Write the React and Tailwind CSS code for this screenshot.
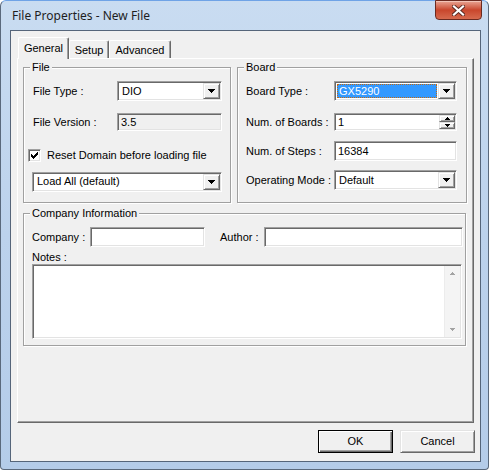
import React from "react";

// classic 3D edges
const sunken =
  "border border-t-[#a0a0a0] border-l-[#a0a0a0] border-r-white border-b-white shadow-[inset_1px_1px_0_#696969,inset_-1px_-1px_0_#e3e3e3]";
const raised =
  "border border-t-[#e3e3e3] border-l-[#e3e3e3] border-r-[#696969] border-b-[#696969] shadow-[inset_1px_1px_0_#fff,inset_-1px_-1px_0_#a0a0a0]";

function Tri({ up = false, color = "#000" }) {
  const rows = up ? [3, 2, 1, 0] : [0, 1, 2, 3];
  return (
    <svg width="7" height="4" viewBox="0 0 7 4" shapeRendering="crispEdges">
      {rows.map((r, i) => (
        <rect key={i} x={r} y={i} width={7 - r * 2} height="1" fill={color} />
      ))}
    </svg>
  );
}

function SmallTri({ up = false, color = "#000" }) {
  const rows = up ? [2, 1, 0] : [0, 1, 2];
  return (
    <svg width="5" height="3" viewBox="0 0 5 3" shapeRendering="crispEdges">
      {rows.map((r, i) => (
        <rect key={i} x={r} y={i} width={5 - r * 2} height="1" fill={color} />
      ))}
    </svg>
  );
}

function Combo({ value, width, selected = false }) {
  return (
    <div className={`${sunken} flex h-[20px] bg-white p-[1px]`} style={{ width }}>
      <div className="flex flex-1 items-center p-[1px]">
        {selected ? (
          <span className="flex h-full flex-1 items-center border border-dotted border-[#c46a10] bg-[#3399ff] pl-[1px] text-white">
            {value}
          </span>
        ) : (
          <span className="pl-[2px]">{value}</span>
        )}
      </div>
      <div className={`${raised} flex w-[17px] items-center justify-center bg-[#f0f0f0]`}>
        <Tri />
      </div>
    </div>
  );
}

function Edit({ value = "", className = "", readOnly = false }) {
  return (
    <div
      className={`${sunken} flex items-center p-[1px] pl-[3px] ${
        readOnly ? "bg-[#f0f0f0]" : "bg-white"
      } ${className}`}
    >
      {value}
    </div>
  );
}

function SpinEdit({ value }) {
  return (
    <div className={`${sunken} flex h-[18px] w-[123px] bg-white p-[1px]`}>
      <div className="flex flex-1 items-center pl-[2px]">{value}</div>
      <div className="flex w-[16px] flex-col">
        <div className={`${raised} flex h-[7px] items-center justify-center bg-[#f0f0f0]`}>
          <SmallTri up />
        </div>
        <div className={`${raised} flex h-[7px] items-center justify-center bg-[#f0f0f0]`}>
          <SmallTri />
        </div>
      </div>
    </div>
  );
}

function Check({ checked, label }) {
  return (
    <div className="flex items-center">
      <div className={`${sunken} flex h-[13px] w-[13px] items-center justify-center bg-white`}>
        {checked && (
          <svg width="7" height="7" viewBox="0 0 7 7" shapeRendering="crispEdges">
            <path d="M0 2h1v1h1v1h1v-1h1v-1h1v-1h1v-1h1v3h-1v1h-1v1h-1v1h-1v1h-1v-1h-1v-1h-1z" fill="#000" />
          </svg>
        )}
      </div>
      <span className="ml-[6px]">{label}</span>
    </div>
  );
}

function GroupBox({ title, className = "", children }) {
  return (
    <fieldset
      className={`border border-[#a0a0a0] shadow-[inset_1px_1px_0_#fff,1px_1px_0_#fff] ${className}`}
    >
      <legend className="ml-[6px] bg-[#f0f0f0] px-[2px] leading-[13px]">{title}</legend>
      {children}
    </fieldset>
  );
}

function Button({ label, isDefault = false }) {
  return (
    <button
      className={
        isDefault
          ? "h-[23px] w-[75px] border border-black bg-[#f0f0f0] shadow-[inset_1px_1px_0_#fff,inset_-1px_-1px_0_#696969,inset_-2px_-2px_0_#a0a0a0]"
          : `${raised} h-[23px] w-[75px] bg-[#f0f0f0]`
      }
    >
      {label}
    </button>
  );
}

function Tabs() {
  const tabs = [
    { label: "General", w: "w-[51px]", active: true },
    { label: "Setup", w: "w-[40px]" },
    { label: "Advanced", w: "w-[62px]" },
  ];
  return (
    <div className="flex h-[21px] items-end pl-[7px]">
      {tabs.map((t) => (
        <div
          key={t.label}
          className={`${t.w} flex items-start justify-center rounded-t-[2px] border-l border-t border-r border-l-white border-t-white border-r-[#696969] bg-[#f0f0f0] shadow-[inset_-1px_0_0_#a0a0a0] ${
            t.active ? "relative z-10 -mb-[1px] h-[22px] pt-[2px]" : "h-[18px] pt-[1px]"
          }`}
        >
          {t.label}
        </div>
      ))}
    </div>
  );
}

export default function App() {
  return (
    <div className="h-[470px] w-[489px] overflow-hidden bg-white font-['Liberation_Sans',Arial,sans-serif] text-[11px] text-black">
      <div className="flex h-full w-full flex-col rounded-t-[6px] rounded-b-[4px] border border-[#5a697c] border-t-[#6fa3e6] border-t-dashed bg-gradient-to-b from-[#c9dcf1] via-[#bcd2ec] to-[#b4cce9]">
        {/* caption */}
        <div className="flex h-[29px] items-start justify-between pl-[11px] pr-[6px]">
          <div className="mt-[7px] font-['Noto_Sans',sans-serif] text-[12px] leading-[15px] text-[#1e1e1e]">
            File Properties - New File
          </div>
          <div className="-mt-[1px] flex h-[20px] w-[47px] items-center justify-center rounded-b-[4px] border border-[#6b2a20] bg-gradient-to-b from-[#e8a493] via-[#c9462c] to-[#d66a4e] shadow-[inset_0_1px_0_#f2c3b6]">
            <svg width="13" height="11" viewBox="0 0 13 11">
              <path
                d="M2 1.5L11 9.5M11 1.5L2 9.5"
                stroke="#5b2a22"
                strokeWidth="4"
                strokeLinecap="square"
              />
              <path
                d="M2 1.5L11 9.5M11 1.5L2 9.5"
                stroke="#fff"
                strokeWidth="2.2"
                strokeLinecap="square"
              />
            </svg>
          </div>
        </div>

        {/* client area */}
        <div className="mb-[7px] ml-[9px] mr-[7px] flex flex-1 flex-col border border-[#55657a] bg-[#f0f0f0]">
          <div className="pt-[6px]">
            <Tabs />
          </div>

          <div className="ml-[6px] h-[365px] w-[457px] border border-t-white border-l-white border-r-[#696969] border-b-[#696969] pl-[5px] pt-[2px] shadow-[inset_-1px_-1px_0_#a0a0a0]">
            <div className="flex gap-[6px]">
              <GroupBox title="File" className="h-[142px] w-[208px]">
                <div className="flex flex-col pl-[9px]">
                  <div className="mt-[7px] flex items-center">
                    <span className="w-[84px]">File Type :</span>
                    <Combo value="DIO" width={105} />
                  </div>
                  <div className="mt-[12px] flex items-center">
                    <span className="w-[84px]">File Version :</span>
                    <Edit value="3.5" readOnly className="h-[18px] w-[105px]" />
                  </div>
                  <div className="-ml-[5px] mt-[16px]">
                    <Check checked label="Reset Domain before loading file" />
                  </div>
                  <div className="-ml-[1px] mt-[8px]">
                    <Combo value="Load All (default)" width={190} />
                  </div>
                </div>
              </GroupBox>

              <GroupBox title="Board" className="h-[142px] w-[230px]">
                <div className="flex flex-col pl-[8px]">
                  <div className="mt-[7px] flex items-center">
                    <span className="w-[88px]">Board Type :</span>
                    <Combo value="GX5290" width={123} selected />
                  </div>
                  <div className="mt-[12px] flex items-center">
                    <span className="w-[88px]">Num. of Boards :</span>
                    <SpinEdit value="1" />
                  </div>
                  <div className="mt-[10px] flex items-center">
                    <span className="w-[88px]">Num. of Steps :</span>
                    <Edit value="16384" className="h-[20px] w-[123px]" />
                  </div>
                  <div className="mt-[9px] flex items-center">
                    <span className="w-[88px]">Operating Mode :</span>
                    <Combo value="Default" width={123} />
                  </div>
                </div>
              </GroupBox>
            </div>

            <GroupBox title="Company Information" className="mt-[4px] h-[139px] w-[443px]">
              <div className="flex flex-col pl-[8px]">
                <div className="mt-[7px] flex items-center">
                  <span className="w-[58px]">Company :</span>
                  <Edit className="h-[20px] w-[115px]" />
                  <span className="ml-[15px] w-[44px]">Author :</span>
                  <Edit className="h-[20px] w-[199px]" />
                </div>
                <div className="mt-[4px] leading-[13px]">Notes :</div>
                <div className={`${sunken} flex h-[75px] w-[430px] bg-white p-[1px]`}>
                  <div className="flex-1" />
                  <div className="flex w-[16px] flex-col items-center justify-between bg-[#f4f4f4] py-[6px] shadow-[inset_1px_0_0_#ececec]">
                    <SmallTri up color="#a3a3a3" />
                    <SmallTri color="#a3a3a3" />
                  </div>
                </div>
              </div>
            </GroupBox>
          </div>

          <div className="mt-[7px] flex justify-end gap-[7px] pr-[5px]">
            <Button label="OK" isDefault />
            <Button label="Cancel" />
          </div>
        </div>
      </div>
    </div>
  );
}
